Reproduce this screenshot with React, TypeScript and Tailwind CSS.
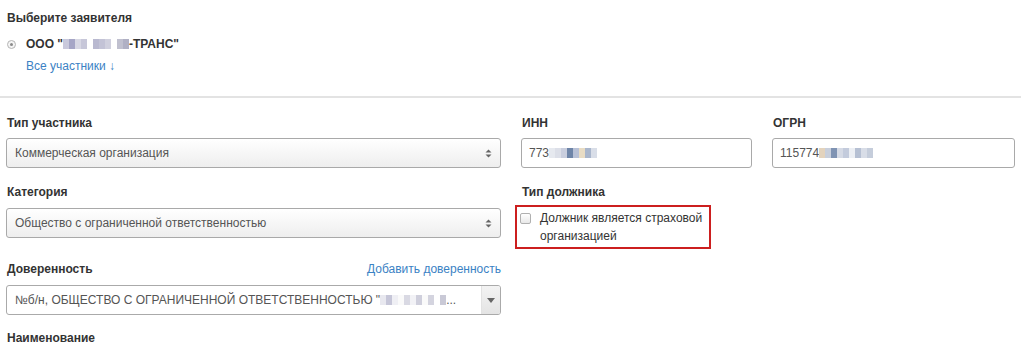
import React from "react";

const font = { fontFamily: '"Liberation Sans", Arial, sans-serif' };

function Blur({ cells, w = 6 }: { cells: string[]; w?: number }) {
  return (
    <span className="inline-flex h-[10px] align-middle">
      {cells.map((c, i) => (
        <span key={i} className="inline-block h-[10px]" style={{ backgroundColor: c, width: w }} />
      ))}
    </span>
  );
}

function UpDown() {
  return (
    <svg width="7" height="9" viewBox="0 0 7 9" className="shrink-0">
      <path d="M3.5 0.5 L6.5 3.5 H0.5 Z" fill="#666" />
      <path d="M3.5 8.5 L6.5 5.5 H0.5 Z" fill="#666" />
    </svg>
  );
}

function Select({ text }: { text: string }) {
  return (
    <div className="flex h-[30px] w-full items-center justify-between rounded-[3px] border border-[#a9a9a9] bg-gradient-to-b from-white to-[#eeeeee] pl-[8px] pr-[8px] text-[12px] text-[#555]">
      <span>{text}</span>
      <UpDown />
    </div>
  );
}

function Label({ children, className = "" }: { children: React.ReactNode; className?: string }) {
  return <div className={`h-4 pl-[1px] text-[12px] font-bold leading-4 text-[#333] ${className}`}>{children}</div>;
}

export default function App() {
  return (
    <div className="min-h-[350px] w-[1021px] overflow-hidden bg-white text-[12px] text-[#333]" style={font}>
      {/* applicant block */}
      <div className="px-[6px] pt-[10px]">
        <Label>Выберите заявителя</Label>
        <div className="mt-[10px] flex h-4 items-center">
          <span className="ml-[1px] flex h-[9px] w-[9px] items-center justify-center rounded-full border border-[#b5b5b5] bg-[#f4f4f4]">
            <span className="h-[3px] w-[3px] rounded-full bg-[#8a8a8a]" />
          </span>
          <span className="ml-[10px] flex items-center font-bold">
            <span>ООО "</span>
            <Blur
              cells={["#c9c9dc", "#a6a6c6", "#d8d8e4", "#c7c7d9", "#fff", "#b9b9d0", "#c3c3d6", "#d0d0de", "#fff", "#c0c0cf", "#b0b0c4"]}
            />
            <span>-ТРАНС"</span>
          </span>
        </div>
        <div className="mt-[6px] flex h-4 items-center pl-[20px] text-[#3b82c4]">Все участники ↓</div>
      </div>

      <div className="mt-[22px] h-[2px] w-full bg-[#e3e3e3]" />

      {/* form */}
      <div className="mt-[17px] flex gap-[20px] px-[6px]">
        {/* left column */}
        <div className="flex w-[495px] flex-col">
          <Label>Тип участника</Label>
          <div className="mt-[7px]">
            <Select text="Коммерческая организация" />
          </div>
          <Label className="mt-[16px]">Категория</Label>
          <div className="mt-[8px]">
            <Select text="Общество с ограниченной ответственностью" />
          </div>
          <div className="mt-[23px] flex h-4 items-center justify-between">
            <span className="pl-[1px] text-[12px] font-bold text-[#333]">Доверенность</span>
            <span className="text-[#3b82c4]">Добавить доверенность</span>
          </div>
          <div className="mt-[8px] flex h-[30px] items-stretch overflow-hidden rounded-[3px] border border-[#aaaaaa] bg-white text-[#555]">
            <div className="flex flex-1 items-center pl-[8px]">
              <span>№б/н, ОБЩЕСТВО С ОГРАНИЧЕННОЙ ОТВЕТСТВЕННОСТЬЮ "</span>
              <Blur
                cells={["#e8e8ef", "#c6c6d8", "#efeff4", "#fafafa", "#d9d9e3", "#f2f2f6", "#cfcfdc", "#fafafa", "#d4d4df", "#fff", "#c9c9d6"]}
              />
              <span>...</span>
            </div>
            <div className="flex w-[19px] items-center justify-center border-l border-[#e2e2e2] bg-gradient-to-b from-[#f3f3f3] to-[#e4e4e4]">
              <svg width="8" height="5" viewBox="0 0 8 5">
                <path d="M0 0 H8 L4 5 Z" fill="#666" />
              </svg>
            </div>
          </div>
          <Label className="mt-[15px]">Наименование</Label>
        </div>

        {/* middle column */}
        <div className="flex w-[231px] flex-col">
          <Label>ИНН</Label>
          <div className="mt-[7px] flex h-[30px] items-center rounded-[3px] border border-[#a9a9a9] bg-white pl-[7px] text-[#555]">
            <span>773</span>
            <Blur cells={["#e6e9ef", "#dcdfe8", "#c9cede", "#6e85a8", "#b8c1d6", "#e8dcc4", "#a9b6cc", "#d9dee8"]} />
          </div>
          <Label className="mt-[16px]">Тип должника</Label>
          <div className="ml-[-6px] mt-[5px] flex h-[44px] w-[196px] items-start border-2 border-[#cc1f1f] pl-[3px] pt-[2px]">
            <span className="mt-[4px] h-[11px] w-[11px] shrink-0 rounded-[2px] border border-[#b0b0b0] bg-gradient-to-b from-white to-[#e8e8e8]" />
            <span className="ml-[9px] leading-[18px] text-[#333]">
              Должник является страховой
              <br />
              организацией
            </span>
          </div>
        </div>

        {/* right column */}
        <div className="flex w-[243px] flex-col">
          <Label>ОГРН</Label>
          <div className="mt-[7px] flex h-[30px] items-center rounded-[3px] border border-[#a9a9a9] bg-white pl-[7px] text-[#555]">
            <span>115774</span>
            <Blur cells={["#e3d3bd", "#c8cfdc", "#7f93b3", "#d5dae5", "#c3cbdc", "#eceff4", "#b6c0d3", "#d8dde7", "#c5cddb"]} />
          </div>
        </div>
      </div>
    </div>
  );
}
